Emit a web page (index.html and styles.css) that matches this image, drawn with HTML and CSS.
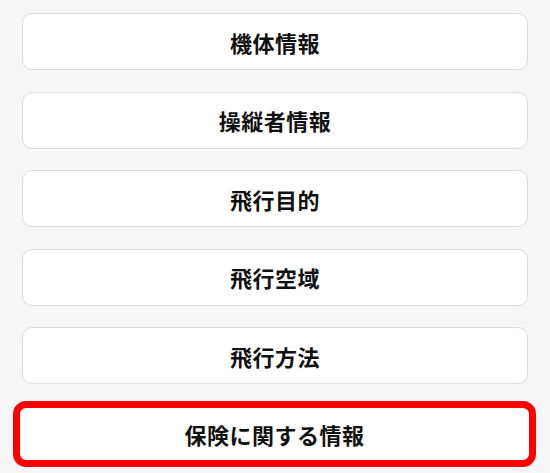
FILE: index.html
```html
<!DOCTYPE html>
<html lang="ja">
<head>
<meta charset="utf-8">
<link rel="stylesheet" href="styles.css">
</head>
<body>
<div class="list">
  <div class="item">機体情報</div>
  <div class="item">操縦者情報</div>
  <div class="item">飛行目的</div>
  <div class="item">飛行空域</div>
  <div class="item">飛行方法</div>
  <div class="item item-active">保険に関する情報</div>
</div>
</body>
</html>
```
FILE: styles.css
```css
html, body {
  margin: 0;
  padding: 0;
  background: #f6f6f6;
}
body {
  width: 550px;
  height: 473px;
  overflow: hidden;
  font-family: "Noto Sans CJK JP", "Noto Sans", sans-serif;
}
.list {
  display: flex;
  flex-direction: column;
  gap: 21.5px;
  padding: 13px 22px 0 22px;
}
.item {
  box-sizing: border-box;
  height: 57px;
  background: #ffffff;
  border: 1px solid #dcdcdc;
  border-radius: 10px;
  display: flex;
  align-items: center;
  justify-content: center;
  font-size: 22px;
  font-weight: 700;
  color: #111111;
  letter-spacing: 0.5px;
}
.item-active {
  height: 66px;
  margin: -4.5px -8px 0 -9px;
  border: 7px solid #ff0000;
  border-radius: 13px;
}
```
